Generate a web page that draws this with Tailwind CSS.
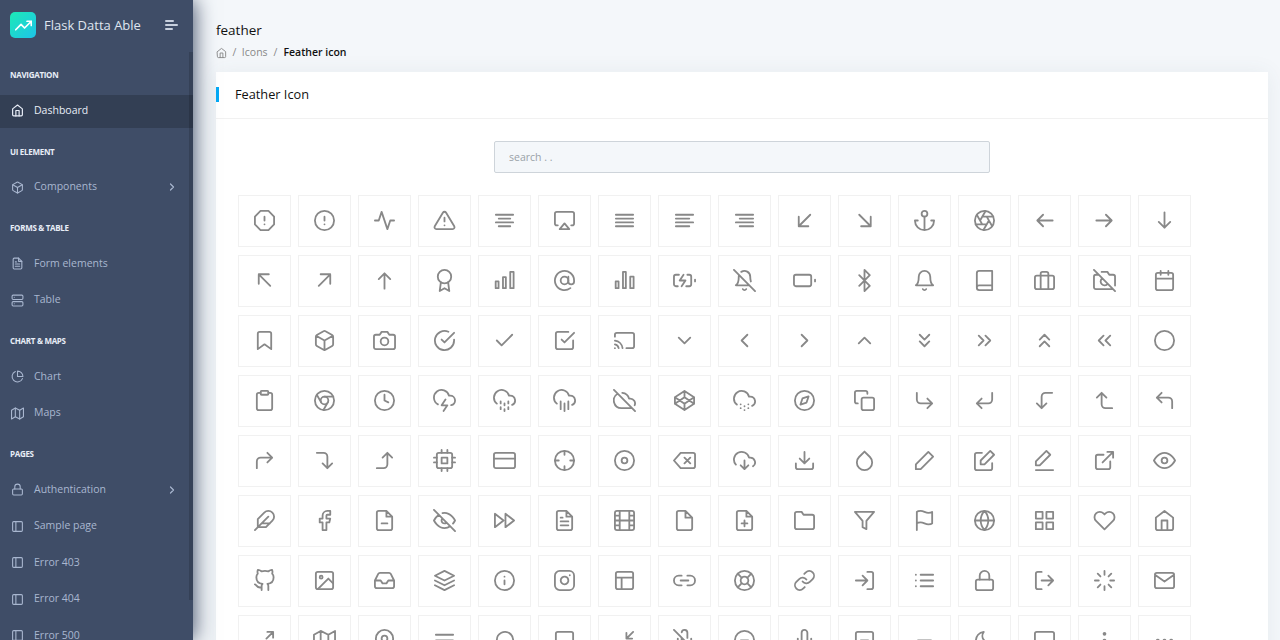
<!DOCTYPE html>
<html lang="en">
<head>
<meta charset="utf-8">
<title>Feather Icon</title>
<script src="https://cdn.jsdelivr.net/npm/@tailwindcss/browser@4"></script>
</head>
<body class="h-[640px] overflow-hidden bg-[#f4f7fa] font-['Open_Sans',sans-serif]">
<div class="flex h-[640px] overflow-hidden">

  <!-- sidebar -->
  <aside class="relative z-10 h-[640px] w-[193px] shrink-0 overflow-hidden bg-[#3f4d67] text-[10.5px] text-[#a9b7d0] shadow-[1px_0_20px_0_#3f4d67]">
    <div class="absolute right-[0.5px] top-[52px] z-10 h-[548px] w-[3.5px] bg-black/15"></div>

    <div class="flex h-[54px] items-center pb-[4px] pl-[10px]">
      <div class="flex h-[26px] w-[26px] items-center justify-center rounded-[5px] bg-[linear-gradient(135deg,#1de9b6,#1dc4e9)]">
        <svg class="h-[17px] w-[17px]" viewBox="0 0 24 24" fill="none" stroke="#fff" stroke-width="2.4" stroke-linecap="round" stroke-linejoin="round"><path d="M23 6l-9.5 9.5-5-5L1 18M17 6h6v6"/></svg>
      </div>
      <span class="ml-[8px] mt-[1px] text-[13px] text-[#dfe5ef]">Flask Datta Able</span>
      <div class="ml-[24px] flex w-[13px] flex-col gap-[2.4px]">
        <span class="h-[2px] w-[9px] rounded-full bg-[#c8d0de]"></span>
        <span class="h-[2px] w-[13px] rounded-full bg-[#c8d0de]"></span>
        <span class="h-[2px] w-[8px] rounded-full bg-[#c8d0de]"></span>
      </div>
    </div>

    <div class="flex h-[41px] items-center pt-[1px] pl-[10px] text-[8px] font-bold tracking-[-0.3px] text-[#e8edf7]">NAVIGATION</div>
    <a class="mb-[3.5px] flex h-[33px] items-center bg-[#333f54] pb-[2px] pl-[11px] font-medium text-[#e8edf7]">
      <svg class="mr-[10px] h-[13px] w-[13px]" viewBox="0 0 24 24" fill="none" stroke="currentColor" stroke-width="2.2" stroke-linecap="round" stroke-linejoin="round"><path d="M3 9l9-7 9 7v11a2 2 0 0 1-2 2H5a2 2 0 0 1-2-2z"/><path d="M9 22V12h6v10"/></svg>
      Dashboard
    </a>

    <div class="flex h-[40px] items-center pl-[10px] text-[8px] font-bold tracking-[-0.3px] text-[#e8edf7]">UI ELEMENT</div>
    <a class="mb-[3.5px] flex h-[33px] items-center pb-[2px] pl-[11px]">
      <svg class="mr-[10px] h-[13px] w-[13px]" viewBox="0 0 24 24" fill="none" stroke="currentColor" stroke-width="2" stroke-linecap="round" stroke-linejoin="round"><path d="M21 16V8a2 2 0 0 0-1-1.73l-7-4a2 2 0 0 0-2 0l-7 4A2 2 0 0 0 3 8v8a2 2 0 0 0 1 1.73l7 4a2 2 0 0 0 2 0l7-4A2 2 0 0 0 21 16z"/><path d="M3.27 6.96L12 12.01l8.73-5.05M12 22.08V12"/></svg>
      Components
      <svg class="ml-auto mr-[15px] h-[12px] w-[12px]" viewBox="0 0 24 24" fill="none" stroke="currentColor" stroke-width="2.4" stroke-linecap="round" stroke-linejoin="round"><path d="M9 18l6-6-6-6"/></svg>
    </a>

    <div class="flex h-[40px] items-center pl-[10px] text-[8px] font-bold tracking-[-0.3px] text-[#e8edf7]">FORMS &amp; TABLE</div>
    <a class="mb-[3.5px] flex h-[33px] items-center pb-[2px] pl-[11px]">
      <svg class="mr-[10px] h-[13px] w-[13px]" viewBox="0 0 24 24" fill="none" stroke="currentColor" stroke-width="2" stroke-linecap="round" stroke-linejoin="round"><path d="M14 2H6a2 2 0 0 0-2 2v16a2 2 0 0 0 2 2h12a2 2 0 0 0 2-2V8z"/><path d="M14 2v6h6M16 13H8M16 17H8M10 9H8"/></svg>
      Form elements
    </a>
    <a class="mb-[3.5px] flex h-[33px] items-center pb-[2px] pl-[11px]">
      <svg class="mr-[10px] h-[13px] w-[13px]" viewBox="0 0 24 24" fill="none" stroke="currentColor" stroke-width="2" stroke-linecap="round" stroke-linejoin="round"><rect x="2" y="2" width="20" height="8" rx="2"/><rect x="2" y="14" width="20" height="8" rx="2"/><path d="M6 6h.01M6 18h.01"/></svg>
      Table
    </a>

    <div class="flex h-[40px] items-center pl-[10px] text-[8px] font-bold tracking-[-0.3px] text-[#e8edf7]">CHART &amp; MAPS</div>
    <a class="mb-[3.5px] flex h-[33px] items-center pb-[2px] pl-[11px]">
      <svg class="mr-[10px] h-[13px] w-[13px]" viewBox="0 0 24 24" fill="none" stroke="currentColor" stroke-width="2" stroke-linecap="round" stroke-linejoin="round"><path d="M21.21 15.89A10 10 0 1 1 8 2.83"/><path d="M22 12A10 10 0 0 0 12 2v10z"/></svg>
      Chart
    </a>
    <a class="mb-[3.5px] flex h-[33px] items-center pb-[2px] pl-[11px]">
      <svg class="mr-[10px] h-[13px] w-[13px]" viewBox="0 0 24 24" fill="none" stroke="currentColor" stroke-width="2" stroke-linecap="round" stroke-linejoin="round"><path d="M1 6v16l7-4 8 4 7-4V2l-7 4-8-4z"/><path d="M8 2v16M16 6v16"/></svg>
      Maps
    </a>

    <div class="flex h-[40px] items-center pl-[10px] text-[8px] font-bold tracking-[-0.3px] text-[#e8edf7]">PAGES</div>
    <a class="mb-[3.5px] flex h-[33px] items-center pb-[2px] pl-[11px]">
      <svg class="mr-[10px] h-[13px] w-[13px]" viewBox="0 0 24 24" fill="none" stroke="currentColor" stroke-width="2" stroke-linecap="round" stroke-linejoin="round"><rect x="3" y="11" width="18" height="11" rx="2"/><path d="M7 11V7a5 5 0 0 1 10 0v4"/></svg>
      Authentication
      <svg class="ml-auto mr-[15px] h-[12px] w-[12px]" viewBox="0 0 24 24" fill="none" stroke="currentColor" stroke-width="2.4" stroke-linecap="round" stroke-linejoin="round"><path d="M9 18l6-6-6-6"/></svg>
    </a>
    <a class="mb-[3.5px] flex h-[33px] items-center pb-[2px] pl-[11px]">
      <svg class="mr-[10px] h-[13px] w-[13px]" viewBox="0 0 24 24" fill="none" stroke="currentColor" stroke-width="2" stroke-linecap="round" stroke-linejoin="round"><rect x="3" y="3" width="18" height="18" rx="2"/><path d="M9 3v18"/></svg>
      Sample page
    </a>
    <a class="mb-[3.5px] flex h-[33px] items-center pb-[2px] pl-[11px]">
      <svg class="mr-[10px] h-[13px] w-[13px]" viewBox="0 0 24 24" fill="none" stroke="currentColor" stroke-width="2" stroke-linecap="round" stroke-linejoin="round"><rect x="3" y="3" width="18" height="18" rx="2"/><path d="M9 3v18"/></svg>
      Error 403
    </a>
    <a class="mb-[3.5px] flex h-[33px] items-center pb-[2px] pl-[11px]">
      <svg class="mr-[10px] h-[13px] w-[13px]" viewBox="0 0 24 24" fill="none" stroke="currentColor" stroke-width="2" stroke-linecap="round" stroke-linejoin="round"><rect x="3" y="3" width="18" height="18" rx="2"/><path d="M9 3v18"/></svg>
      Error 404
    </a>
    <a class="mb-[3.5px] flex h-[33px] items-center pb-[2px] pl-[11px]">
      <svg class="mr-[10px] h-[13px] w-[13px]" viewBox="0 0 24 24" fill="none" stroke="currentColor" stroke-width="2" stroke-linecap="round" stroke-linejoin="round"><rect x="3" y="3" width="18" height="18" rx="2"/><path d="M9 3v18"/></svg>
      Error 500
    </a>
  </aside>

  <!-- main -->
  <main class="min-w-0 flex-1 pl-[23px] pr-[12px] pt-[20px]">
    <h1 class="text-[13.5px] leading-[20px] text-[#111]">feather</h1>
    <div class="mt-[5px] flex h-[16px] items-center text-[10.5px] text-[#888]">
      <svg class="h-[12px] w-[11px]" viewBox="0 0 24 24" fill="none" stroke="currentColor" stroke-width="2" stroke-linecap="round" stroke-linejoin="round"><path d="M3 9l9-7 9 7v11a2 2 0 0 1-2 2H5a2 2 0 0 1-2-2z"/><path d="M9 22V12h6v10"/></svg>
      <span class="mx-[5.5px]">/</span>
      <span>Icons</span>
      <span class="mx-[6px]">/</span>
      <span class="font-semibold text-[#111]">Feather icon</span>
    </div>

    <section class="mt-[11px] bg-white shadow-[0_1px_20px_0_rgba(69,90,100,0.08)]">
      <div class="relative flex h-[47px] items-center border-b border-[#f1f1f1] pl-[19px] text-[12.75px] text-[#111]">
        <span class="absolute left-0 top-[15px] h-[15px] w-[3px] bg-[#04a9f5]"></span>
        Feather Icon
      </div>
      <div class="px-[22px] pt-[22px]">
        <input placeholder="search . ." class="mx-auto block h-[32px] w-[496px] rounded-[2px] border border-[#ced4da] bg-[#f4f7fa] px-[14px] text-[10.5px] placeholder:text-[#9aa2a8]">
        <div id="icons" class="mt-[22px] grid grid-cols-[repeat(16,53px)] gap-x-[7px] gap-y-[8px]"></div>
      </div>
    </section>
  </main>
</div>

<script>
  const c = (x, y, r) => `<circle cx="${x}" cy="${y}" r="${r}"/>`;
  const p = d => `<path d="${d}"/>`;
  const r = (x, y, w, h, rx = 2) => `<rect x="${x}" y="${y}" width="${w}" height="${h}" rx="${rx}"/>`;
  const big = c(12, 12, 10);
  const icons = [
    // row 1
    p("M7.86 2h8.28L22 7.86v8.28L16.14 22H7.86L2 16.14V7.86zM12 8v4M12 16h.01"),
    big + p("M12 8v4M12 16h.01"),
    p("M22 12h-4l-3 9L9 3l-3 9H2"),
    p("M10.29 3.86L1.82 18a2 2 0 0 0 1.71 3h16.94a2 2 0 0 0 1.71-3L13.71 3.86a2 2 0 0 0-3.42 0zM12 9v4M12 17h.01"),
    p("M18 10H6M21 6H3M21 14H3M18 18H6"),
    p("M5 17H4a2 2 0 0 1-2-2V5a2 2 0 0 1 2-2h16a2 2 0 0 1 2 2v10a2 2 0 0 1-2 2h-1M12 15l5 6H7z"),
    p("M21 10H3M21 6H3M21 14H3M21 18H3"),
    p("M17 10H3M21 6H3M21 14H3M17 18H3"),
    p("M21 10H7M21 6H3M21 14H3M21 18H7"),
    p("M18 6L6 18M6 8v10h10"),
    p("M6.5 6l12 12M18.5 8v10h-10"),
    c(12, 5, 3) + p("M12 22V8M5 12H2a10 10 0 0 0 20 0h-3"),
    big + p("M14.31 8l5.74 9.94M9.69 8h11.48M7.38 12l5.74-9.94M9.69 16L3.95 6.06M14.31 16H2.83M16.62 12l-5.74 9.94"),
    p("M20.5 12H4.5M10.5 18l-6-6 6-6"),
    p("M3.5 12h16M13.5 6l6 6-6 6"),
    p("M12 3.5v16M18 13.5l-6 6-6-6"),
    // row 2
    p("M18 17.5L6 5.5M6 15.5v-10h10.5"),
    p("M6 17.5L18 5.5M8 5.5h10v10"),
    p("M12 20.5v-16M6 10.5l6-6 6 6"),
    c(12, 8, 7) + p("M8.21 13.89L7 23l5-3 5 3-1.21-9.12"),
    r(2.8, 13, 3, 7, 0) + r(10.4, 8.5, 3, 11.5, 0) + r(18, 3, 3.5, 17, 0),
    c(12, 12, 4) + p("M16 8v5a3 3 0 0 0 6 0v-1a10 10 0 1 0-3.92 7.94"),
    r(2.8, 13, 3, 7, 0) + r(10.4, 3, 3, 17, 0) + r(18, 8, 3.5, 12, 0),
    p("M5 18H3a2 2 0 0 1-2-2V8a2 2 0 0 1 2-2h3.19M15 6h2a2 2 0 0 1 2 2v8a2 2 0 0 1-2 2h-3.19M23 13v-2M11 6l-4 6h6l-4 6"),
    p("M13.73 21a2 2 0 0 1-3.46 0M18.63 13A17.89 17.89 0 0 1 18 8M6.26 6.26A5.86 5.86 0 0 0 6 8c0 7-3 9-3 9h14M18 8a6 6 0 0 0-9.33-5M1 1l22 22"),
    r(1, 6, 18, 12) + p("M23 13v-2"),
    p("M6.5 6.5l11 11L12 23V1l5.5 5.5-11 11"),
    p("M18 8A6 6 0 0 0 6 8c0 7-3 9-3 9h18s-3-2-3-9M13.73 21a2 2 0 0 1-3.46 0"),
    p("M4 19.5A2.5 2.5 0 0 1 6.5 17H20M6.5 2H20v20H6.5A2.5 2.5 0 0 1 4 19.5v-15A2.5 2.5 0 0 1 6.5 2z"),
    r(2, 7, 20, 14) + p("M16 21V5a2 2 0 0 0-2-2h-4a2 2 0 0 0-2 2v16"),
    p("M1 1l22 22M21 21H3a2 2 0 0 1-2-2V8a2 2 0 0 1 2-2h3m3-3h6l2 3h4a2 2 0 0 1 2 2v9.34m-7.72-2.06a4 4 0 1 1-5.56-5.56"),
    r(3, 4, 18, 18) + p("M16 2v4M8 2v4M3 10h18"),
    // row 3
    p("M19 21l-7-5-7 5V5a2 2 0 0 1 2-2h10a2 2 0 0 1 2 2z"),
    p("M21 16V8a2 2 0 0 0-1-1.73l-7-4a2 2 0 0 0-2 0l-7 4A2 2 0 0 0 3 8v8a2 2 0 0 0 1 1.73l7 4a2 2 0 0 0 2 0l7-4A2 2 0 0 0 21 16zM3.27 6.96L12 12.01l8.73-5.05M12 22.08V12"),
    p("M23 19a2 2 0 0 1-2 2H3a2 2 0 0 1-2-2V8a2 2 0 0 1 2-2h4l2-3h6l2 3h4a2 2 0 0 1 2 2z") + c(12, 13, 4),
    p("M22 11.08V12a10 10 0 1 1-5.93-9.14M22 4L12 14.01l-3-3"),
    p("M20 6L9 17l-5-5"),
    p("M9 11l3 3L22 4M21 12v7a2 2 0 0 1-2 2H5a2 2 0 0 1-2-2V5a2 2 0 0 1 2-2h11"),
    p("M2 16.1A5 5 0 0 1 5.9 20M2 12.05A9 9 0 0 1 9.95 20M2 8V6a2 2 0 0 1 2-2h16a2 2 0 0 1 2 2v12a2 2 0 0 1-2 2h-6M2 20h.01"),
    p("M6 9l6 6 6-6"),
    p("M15 18l-6-6 6-6"),
    p("M9 18l6-6-6-6"),
    p("M18 15l-6-6-6 6"),
    p("M7 13l5 5 5-5M7 6l5 5 5-5"),
    p("M13 17l5-5-5-5M6 17l5-5-5-5"),
    p("M17 11l-5-5-5 5M17 18l-5-5-5 5"),
    p("M11 17l-5-5 5-5M18 17l-5-5 5-5"),
    big,
    // row 4
    p("M16 4h2a2 2 0 0 1 2 2v14a2 2 0 0 1-2 2H6a2 2 0 0 1-2-2V6a2 2 0 0 1 2-2h2") + r(8, 2, 8, 4, 1),
    big + c(12, 12, 4) + p("M21.17 8H12M3.95 6.06L8.54 14M10.88 21.94L15.46 14"),
    big + p("M12 6v6l4 2"),
    p("M19 16.9A5 5 0 0 0 18 7h-1.26a8 8 0 1 0-11.62 9M13 11l-4 6h6l-4 6"),
    p("M8 19v2M8 13v2M16 19v2M16 13v2M12 21v2M12 15v2M20 16.58A5 5 0 0 0 18 7h-1.26A8 8 0 1 0 4 15.25"),
    p("M16 13v8M8 13v8M12 15v8M20 16.58A5 5 0 0 0 18 7h-1.26A8 8 0 1 0 4 15.25"),
    p("M22.61 16.95A5 5 0 0 0 18 10h-1.26a8 8 0 0 0-7.05-6M5 5a8 8 0 0 0 4 15h9a5 5 0 0 0 1.7-.3M1 1l22 22"),
    p("M12 2l10 6.5v7L12 22 2 15.5v-7zM12 22v-6.5M22 8.5l-10 7-10-7M2 15.5l10-7 10 7M12 2v6.5"),
    p("M20 17.58A5 5 0 0 0 18 8h-1.26A8 8 0 1 0 4 16.25M8 16h.01M8 20h.01M12 18h.01M12 22h.01M16 16h.01M16 20h.01"),
    big + p("M16.24 7.76l-2.12 6.36-6.36 2.12 2.12-6.36z"),
    r(9, 9, 13, 13) + p("M5 15H4a2 2 0 0 1-2-2V4a2 2 0 0 1 2-2h9a2 2 0 0 1 2 2v1"),
    p("M15 10l5 5-5 5M4 4v7a4 4 0 0 0 4 4h12"),
    p("M9 10l-5 5 5 5M20 4v7a4 4 0 0 1-4 4H4"),
    p("M14 15l-5 5-5-5M20 4h-7a4 4 0 0 0-4 4v12"),
    p("M14 9L9 4 4 9M20 20h-7a4 4 0 0 1-4-4V4"),
    p("M9 14L4 9l5-5M20 20v-7a4 4 0 0 0-4-4H4"),
    // row 5
    p("M15 14l5-5-5-5M4 20v-7a4 4 0 0 1 4-4h12"),
    p("M10 15l5 5 5-5M4 4h7a4 4 0 0 1 4 4v12"),
    p("M10 9l5-5 5 5M4 20h7a4 4 0 0 0 4-4V4"),
    r(4, 4, 16, 16) + r(9, 9, 6, 6, 0) + p("M9 1v3M15 1v3M9 20v3M15 20v3M20 9h3M20 14h3M1 9h3M1 14h3"),
    r(1, 4, 22, 16) + p("M1 10h22"),
    big + p("M22 12h-4M6 12H2M12 6V2M12 22v-4"),
    big + c(12, 12, 3),
    p("M21 4H8l-7 8 7 8h13a2 2 0 0 0 2-2V6a2 2 0 0 0-2-2zM18 9l-6 6M12 9l6 6"),
    p("M8 17l4 4 4-4M12 12v9M20.88 18.09A5 5 0 0 0 18 9h-1.26A8 8 0 1 0 3 16.29"),
    p("M21 15v4a2 2 0 0 1-2 2H5a2 2 0 0 1-2-2v-4M7 10l5 5 5-5M12 15V3"),
    p("M12 2.69l5.66 5.66a8 8 0 1 1-11.31 0z"),
    p("M16 3l5 5L8 21H3v-5z"),
    p("M20 14.66V20a2 2 0 0 1-2 2H4a2 2 0 0 1-2-2V6a2 2 0 0 1 2-2h5.34M18 2l4 4-10 10H8v-4z"),
    p("M14 2l4 4L7 17H3v-4zM3 22h18"),
    p("M18 13v6a2 2 0 0 1-2 2H5a2 2 0 0 1-2-2V8a2 2 0 0 1 2-2h6M15 3h6v6M10 14L21 3"),
    p("M1 12s4-8 11-8 11 8 11 8-4 8-11 8-11-8-11-8z") + c(12, 12, 3),
    // row 6
    p("M20.24 12.24a6 6 0 0 0-8.49-8.49L5 10.5V19h8.5zM16 8L2 22M17.5 15H9"),
    p("M18 2h-3a5 5 0 0 0-5 5v3H7v4h3v8h4v-8h3l1-4h-4V7a1 1 0 0 1 1-1h3z"),
    p("M14 2H6a2 2 0 0 0-2 2v16a2 2 0 0 0 2 2h12a2 2 0 0 0 2-2V8zM14 2v6h6M9 15h6"),
    p("M17.94 17.94A10.07 10.07 0 0 1 12 20c-7 0-11-8-11-8a18.45 18.45 0 0 1 5.06-5.94M9.9 4.24A9.12 9.12 0 0 1 12 4c7 0 11 8 11 8a18.5 18.5 0 0 1-2.16 3.19m-6.72-1.07a3 3 0 1 1-4.24-4.24M1 1l22 22"),
    p("M13 19l9-7-9-7zM2 19l9-7-9-7z"),
    p("M14 2H6a2 2 0 0 0-2 2v16a2 2 0 0 0 2 2h12a2 2 0 0 0 2-2V8zM14 2v6h6M16 13H8M16 17H8M10 9H8"),
    r(2, 2, 20, 20, 2.18) + p("M7 2v20M17 2v20M2 12h20M2 7h5M2 17h5M17 17h5M17 7h5"),
    p("M13 2H6a2 2 0 0 0-2 2v16a2 2 0 0 0 2 2h12a2 2 0 0 0 2-2V9zM13 2v7h7"),
    p("M14 2H6a2 2 0 0 0-2 2v16a2 2 0 0 0 2 2h12a2 2 0 0 0 2-2V8zM14 2v6h6M12 18v-6M9 15h6"),
    p("M22 19a2 2 0 0 1-2 2H4a2 2 0 0 1-2-2V5a2 2 0 0 1 2-2h5l2 3h9a2 2 0 0 1 2 2z"),
    p("M22 3H2l8 9.46V19l4 2v-8.54z"),
    p("M4 15s1-1 4-1 5 2 8 2 4-1 4-1V3s-1 1-4 1-5-2-8-2-4 1-4 1zM4 22v-7"),
    big + p("M2 12h20M12 2a15.3 15.3 0 0 1 4 10 15.3 15.3 0 0 1-4 10 15.3 15.3 0 0 1-4-10 15.3 15.3 0 0 1 4-10z"),
    r(3, 3, 7, 7, 0) + r(14, 3, 7, 7, 0) + r(14, 14, 7, 7, 0) + r(3, 14, 7, 7, 0),
    p("M20.84 4.61a5.5 5.5 0 0 0-7.78 0L12 5.67l-1.06-1.06a5.5 5.5 0 0 0-7.78 7.78l1.06 1.06L12 21.23l7.78-7.78 1.06-1.06a5.5 5.5 0 0 0 0-7.78z"),
    p("M3 9l9-7 9 7v11a2 2 0 0 1-2 2H5a2 2 0 0 1-2-2zM9 22V12h6v10"),
    // row 7
    p("M9 19c-5 1.5-5-2.5-7-3m14 6v-3.87a3.37 3.37 0 0 0-.94-2.61c3.14-.35 6.44-1.54 6.44-7A5.44 5.44 0 0 0 20 4.77 5.07 5.07 0 0 0 19.91 1S18.73.65 16 2.48a13.38 13.38 0 0 0-7 0C6.27.65 5.09 1 5.09 1A5.07 5.07 0 0 0 5 4.77a5.44 5.44 0 0 0-1.5 3.78c0 5.42 3.3 6.61 6.44 7A3.37 3.37 0 0 0 9 18.13V22"),
    r(3, 3, 18, 18) + c(8.5, 8.5, 1.5) + p("M21 15l-5-5L5 21"),
    p("M22 12h-6l-2 3h-4l-2-3H2M5.45 5.11L2 12v6a2 2 0 0 0 2 2h16a2 2 0 0 0 2-2v-6l-3.45-6.89A2 2 0 0 0 16.76 4H7.24a2 2 0 0 0-1.79 1.11z"),
    p("M12 2L2 7l10 5 10-5zM2 17l10 5 10-5M2 12l10 5 10-5"),
    big + p("M12 16v-4M12 8h.01"),
    r(2, 2, 20, 20, 5) + p("M16 11.37A4 4 0 1 1 12.63 8 4 4 0 0 1 16 11.37zM17.5 6.5h.01"),
    r(3, 3, 18, 18) + p("M3 9h18M9 21V9"),
    p("M15 7h3a5 5 0 0 1 5 5 5 5 0 0 1-5 5h-3m-6 0H6a5 5 0 0 1-5-5 5 5 0 0 1 5-5h3M8 12h8"),
    big + c(12, 12, 4) + p("M4.93 4.93l4.24 4.24M14.83 14.83l4.24 4.24M14.83 9.17l4.24-4.24M4.93 19.07l4.24-4.24"),
    p("M10 13a5 5 0 0 0 7.54.54l3-3a5 5 0 0 0-7.07-7.07l-1.72 1.71M14 11a5 5 0 0 0-7.54-.54l-3 3a5 5 0 0 0 7.07 7.07l1.71-1.71"),
    p("M15 3h4a2 2 0 0 1 2 2v14a2 2 0 0 1-2 2h-4M10 17l5-5-5-5M15 12H3"),
    p("M8 6h13M8 12h13M8 18h13M3 6h.01M3 12h.01M3 18h.01"),
    r(3, 11, 18, 11) + p("M7 11V7a5 5 0 0 1 10 0v4"),
    p("M9 21H5a2 2 0 0 1-2-2V5a2 2 0 0 1 2-2h4M16 17l5-5-5-5M21 12H9"),
    p("M12 2v4M12 18v4M4.93 4.93l2.83 2.83M16.24 16.24l2.83 2.83M2 12h4M18 12h4M4.93 19.07l2.83-2.83M16.24 7.76l2.83-2.83"),
    p("M4 4h16c1.1 0 2 .9 2 2v12c0 1.1-.9 2-2 2H4c-1.1 0-2-.9-2-2V6c0-1.1.9-2 2-2zM22 6l-10 7L2 6"),
    // row 8
    p("M15 3h6v6M9 21H3v-6M21 3l-7 7M3 21l7-7"),
    p("M1 6v16l7-4 8 4 7-4V2l-7 4-8-4zM8 2v16M16 6v16"),
    p("M21 10c0 7-9 13-9 13s-9-6-9-13a9 9 0 0 1 18 0z") + c(12, 10, 3),
    p("M3 12h18M3 6h18M3 18h18"),
    p("M21 11.5a8.38 8.38 0 0 1-.9 3.8 8.5 8.5 0 0 1-7.6 4.7 8.38 8.38 0 0 1-3.8-.9L3 21l1.9-5.7a8.38 8.38 0 0 1-.9-3.8 8.5 8.5 0 0 1 4.7-7.6 8.38 8.38 0 0 1 3.8-.9h.5a8.48 8.48 0 0 1 8 8v.5z"),
    p("M21 15a2 2 0 0 1-2 2H7l-4 4V5a2 2 0 0 1 2-2h14a2 2 0 0 1 2 2z"),
    p("M4 14h6v6M20 10h-6V4M14 10l7-7M3 21l7-7"),
    p("M1 1l22 22M9 9v3a3 3 0 0 0 5.12 2.12M15 9.34V4a3 3 0 0 0-5.94-.6M17 16.95A7 7 0 0 1 5 12v-2m14 0v2a7 7 0 0 1-.11 1.23M12 19v4M8 23h8"),
    big + p("M8 12h8"),
    p("M12 1a3 3 0 0 0-3 3v8a3 3 0 0 0 6 0V4a3 3 0 0 0-3-3zM19 10v2a7 7 0 0 1-14 0v-2M12 19v4M8 23h8"),
    r(3, 3, 18, 18) + p("M8 12h8"),
    p("M5 12h14"),
    p("M21 12.79A9 9 0 1 1 11.21 3 7 7 0 0 0 21 12.79z"),
    r(2, 3, 20, 14) + p("M8 21h8M12 17v4"),
    c(12, 12, 1) + c(12, 5, 1) + c(12, 19, 1),
    c(12, 12, 1) + c(19, 12, 1) + c(5, 12, 1)
  ];

  document.getElementById("icons").innerHTML = icons.map(svg =>
    `<div class="flex h-[52px] items-center justify-center border border-[#f1f1f1] pb-[1px]">
      <svg class="h-[23px] w-[23px]" viewBox="0 0 24 24" fill="none" stroke="#888" stroke-width="1.9" stroke-linecap="round" stroke-linejoin="round">${svg}</svg>
    </div>`).join("");
</script>
</body>
</html>
